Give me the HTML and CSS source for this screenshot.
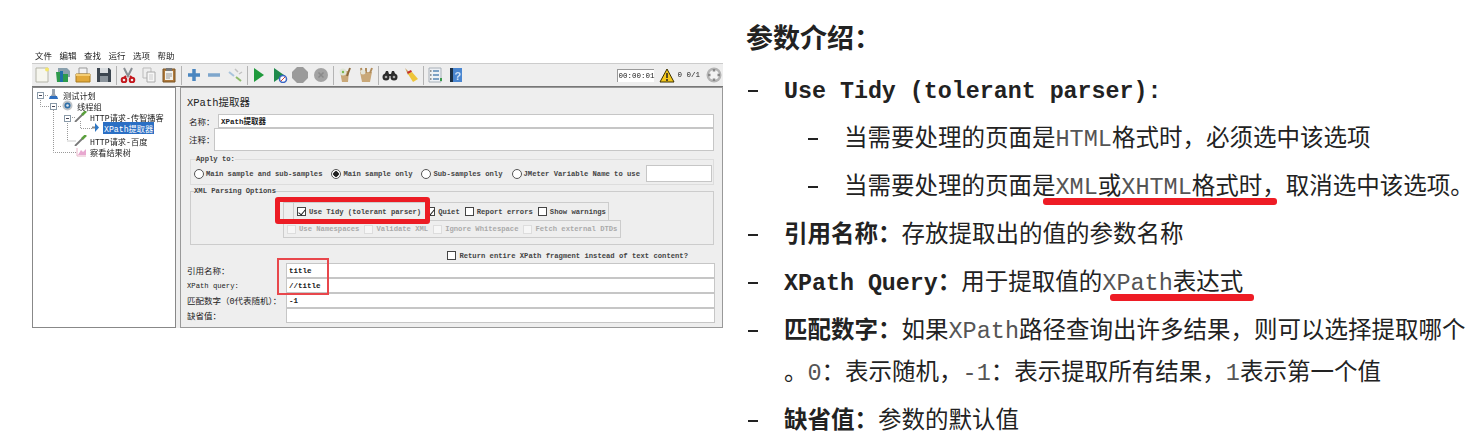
FILE: index.html
```html
<!doctype html>
<html lang="zh-CN">
<head>
    <meta charset="UTF-8">
    <title>XPath提取器 参数介绍</title>
    <link rel="stylesheet" href="styles.css">
</head>
<body>
<div class="page">

    <div class="shot">
        <div class="menubar">
            <span>文件</span><span>编辑</span><span>查找</span><span>运行</span><span>选项</span><span>帮助</span>
        </div>

        <div class="toolbar">
            <svg class="tb" viewBox="0 0 16 16"><path d="M2 1h12v14H2z" fill="#f6f6ee" stroke="#b4b4a8"/><circle cx="13" cy="2.500" r="2" fill="#f4e66a"/></svg>
            <svg class="tb" viewBox="0 0 16 16"><path d="M3 1h9l3 3v6H3z" fill="#8aa0ad"/><path d="M1 5h6l1 2h5v8H2z" fill="#2d9a4c"/><path d="M5 4h3v11H5z" fill="#1f6fa8"/></svg>
            <svg class="tb" viewBox="0 0 16 16"><path d="M4 1h8v6H4z" fill="#f2f2f2" stroke="#999"/><path d="M1 7h14v8H1z" fill="#e2a93a" stroke="#a87a1e"/><path d="M1 7h14v2H1z" fill="#f4cd74"/></svg>
            <svg class="tb" viewBox="0 0 16 16"><path d="M1 1h12l2 2v12H1z" fill="#3c4650"/><path d="M4 1h8v5H4z" fill="#d9dde0"/><path d="M4 9h8v6H4z" fill="#8a939b"/></svg>
            <i class="sep"></i>
            <svg class="tb" viewBox="0 0 16 16"><path d="M4 1l4 8 4-8" fill="none" stroke="#8a8f94" stroke-width="2"/><path d="M6 9l-2 2M10 9l2 2" stroke="#c3181e" stroke-width="2"/><circle cx="4" cy="13" r="2.300" fill="none" stroke="#c3181e" stroke-width="2"/><circle cx="12" cy="13" r="2.300" fill="none" stroke="#c3181e" stroke-width="2"/></svg>
            <svg class="tb" viewBox="0 0 16 16"><path d="M2 1h8v10H2z" fill="#eee" stroke="#bbb"/><path d="M6 5h8v10H6z" fill="#f6f6f6" stroke="#aaa"/><path d="M8 8h4M8 10h4M8 12h4" stroke="#ccc"/></svg>
            <svg class="tb" viewBox="0 0 16 16"><path d="M2 2h12v13H2z" fill="#b07a3c" stroke="#7a5424"/><path d="M4 4h8v9H4z" fill="#f2f2ee"/><path d="M5 1h6v3H5z" fill="#777"/><path d="M5 7h6M5 9h6M5 11h4" stroke="#999"/></svg>
            <i class="sep"></i>
            <svg class="tb" viewBox="0 0 16 16"><path d="M8 2v12M2 8h12" stroke="#4a86c0" stroke-width="3.500"/></svg>
            <svg class="tb" viewBox="0 0 16 16"><path d="M2 8h12" stroke="#7ea6cc" stroke-width="3.500"/></svg>
            <svg class="tb" viewBox="0 0 16 16"><path d="M2 5l5 4" stroke="#a9c4dc" stroke-width="2"/><path d="M9 10l5 4" stroke="#8dbb6a" stroke-width="2"/><path d="M8 2l3 3M12 7l3-2" stroke="#c2c2c2" stroke-width="1.500"/></svg>
            <i class="sep"></i>
            <svg class="tb" viewBox="0 0 16 16"><path d="M3 1l10 7-10 7z" fill="#1f9a3c"/></svg>
            <svg class="tb" viewBox="0 0 16 16"><path d="M2 1l10 7-10 7z" fill="#1f8a4c"/><circle cx="11" cy="12" r="3.500" fill="#fff" stroke="#3a66c4" stroke-width="1.500"/><path d="M9 14l4-4" stroke="#d0463c"/></svg>
            <svg class="tb" viewBox="0 0 16 16"><path d="M5 0h6l5 5v6l-5 5H5l-5-5V5z" fill="#9b9b9b"/></svg>
            <svg class="tb" viewBox="0 0 16 16"><circle cx="8" cy="8" r="7" fill="#a3a3a3"/><path d="M5.500 5.500l5 5M10.500 5.500l-5 5" stroke="#8a8a8a" stroke-width="1.500"/></svg>
            <i class="sep"></i>
            <svg class="tb" viewBox="0 0 16 16"><path d="M3 4h9l-1 11H5z" fill="#c9a878"/><circle cx="6" cy="5" r="3.500" fill="#dfe6d8"/><circle cx="6" cy="5" r="1.200" fill="#7cb84a"/><path d="M13 1l-3 8" stroke="#8c6a3c" stroke-width="2"/></svg>
            <svg class="tb" viewBox="0 0 16 16"><path d="M2 5h12l-2 10H4z" fill="#c9a878"/><path d="M4 6L3 1M8 6V1M12 6l2-5" stroke="#b08c5c" stroke-width="2"/><circle cx="5" cy="5" r="2.500" fill="#e4e4d8"/></svg>
            <i class="sep"></i>
            <svg class="tb" viewBox="0 0 16 16"><circle cx="4" cy="10" r="3.500" fill="#2c2c2c"/><circle cx="12" cy="10" r="3.500" fill="#2c2c2c"/><path d="M2 9l2-5h2l1 3h2l1-3h2l2 5z" fill="#2c2c2c"/><circle cx="4" cy="10" r="1.300" fill="#aaa"/><circle cx="12" cy="10" r="1.300" fill="#aaa"/></svg>
            <svg class="tb" viewBox="0 0 16 16"><path d="M2 1l5 5-2 2z" fill="#c9a060"/><path d="M4 5l4-2 1 2-4 2z" fill="#c8302a"/><path d="M5 7l4-2 6 7-5 3z" fill="#eec53a"/></svg>
            <i class="sep"></i>
            <svg class="tb" viewBox="0 0 16 16"><path d="M2 1h12v14H2z" fill="#eef1f5" stroke="#a8b0b8"/><path d="M6 4h6M6 8h6M6 12h6" stroke="#5a86b4" stroke-width="1.500"/><path d="M3 4h1.500M3 8h1.500M3 12h1.500" stroke="#777" stroke-width="1.500"/><path d="M13 11h2v3h-2z" fill="#3a9a4c"/></svg>
            <svg class="tb" viewBox="0 0 16 16"><path d="M2 1h3v14H2z" fill="#1d3044"/><path d="M5 1h9v14H5z" fill="#4a86d0"/><text x="6.500" y="12.500" class="helpq">?</text></svg>

            <div class="status">
                <span class="clock">00:00:01</span>
                <svg class="warn" viewBox="0 0 16 15"><path d="M8 1l7 13H1z" fill="#f4c81e" stroke="#3a3000"/><path d="M8 5v5M8 11v2" stroke="#222" stroke-width="1.500"/></svg>
                <span class="count">0</span>
                <span class="count wide">0/1</span>
                <svg class="ring" viewBox="0 0 16 16"><circle cx="8" cy="8" r="7.500" fill="#b4b4b4"/><circle cx="8" cy="8" r="5" fill="#f2f2f2"/><path d="M8 2v2.500M8 11.500V14M2 8h2.500M11.500 8H14" stroke="#888" stroke-width="2.500"/></svg>
            </div>
        </div>

        <div class="main">
            <div class="tree">
                <svg class="links" viewBox="0 0 144 100">
                    <path d="M8.500 11v8.500H18M21.500 23V65.500H44M35.500 34V54H44M48.500 34V41.500H60M11 8.500h6M24 19.500h5M38 30.500h5" fill="none" stroke="#999" stroke-dasharray="1 1"/>
                    <g fill="#fff" stroke="#8a9aa8"><rect x="5.500" y="5.500" width="6" height="6"/><rect x="18.500" y="16.500" width="6" height="6"/><rect x="32.500" y="28.500" width="6" height="6"/></g>
                    <path d="M7 8.500h3M20 19.500h3M34 31.500h3" stroke="#445"/>
                </svg>
                <div class="node l0"><svg viewBox="0 0 13 11"><path d="M5 0h3v5l3 5H2l3-5z" fill="#9aa4b0"/><path d="M3 7h7l1 3H2z" fill="#2f6fc0"/></svg><span>测试计划</span></div>
                <div class="node l1"><svg viewBox="0 0 13 11"><circle cx="6.500" cy="5.500" r="5" fill="#c0c4c8"/><circle cx="6.500" cy="5.500" r="3" fill="#2f6fa8"/><circle cx="6.500" cy="5.500" r="1.300" fill="#dfe6ee"/></svg><span>线程组</span></div>
                <div class="node l2"><svg viewBox="0 0 13 11"><path d="M1 11L9 3" stroke="#777" stroke-width="1.800"/><path d="M8 4l4-4" stroke="#5aa03c" stroke-width="2.500"/></svg><span>HTTP请求-传智播客</span></div>
                <div class="node l3"><svg viewBox="0 0 13 11"><path d="M5 5.500h3" stroke="#888" stroke-width="2"/><path d="M8 1l4 4.500L8 10z" fill="#2f78c4"/></svg><span class="picked">XPath提取器</span></div>
                <div class="node l2 gap"><svg viewBox="0 0 13 11"><path d="M1 11L9 3" stroke="#777" stroke-width="1.800"/><path d="M8 4l4-4" stroke="#5aa03c" stroke-width="2.500"/></svg><span>HTTP请求-百度</span></div>
                <div class="node l2"><svg viewBox="0 0 13 11"><path d="M3 2v8h9" fill="none" stroke="#e8b4c8"/><path d="M4 9l3-5 2 2 3-3v6z" fill="#e8a8d0"/></svg><span>察看结果树</span></div>
            </div>

            <div class="panel">
                <div class="title">XPath提取器</div>
                <div class="row name"><label>名称：</label><div class="field val">XPath提取器</div></div>
                <div class="row note"><label>注释：</label><div class="field"></div></div>

                <fieldset class="group">
                    <legend>Apply to:</legend>
                    <div class="radios">
                        <span class="radio"></span><span class="en">Main sample and sub-samples</span>
                        <span class="radio on"></span><span class="en">Main sample only</span>
                        <span class="radio"></span><span class="en">Sub-samples only</span>
                        <span class="radio"></span><span class="en">JMeter Variable Name to use</span>
                        <div class="field varname"></div>
                    </div>
                </fieldset>

                <fieldset class="group xml">
                    <legend>XML Parsing Options</legend>
                    <div class="optbox first">
                        <i class="grip"></i>
                        <span class="opt"><b class="cb on"></b><span class="en">Use Tidy (tolerant parser)</span></span>
                        <span class="opt"><b class="cb on"></b><span class="en">Quiet</span></span>
                        <span class="opt"><b class="cb"></b><span class="en">Report errors</span></span>
                        <span class="opt"><b class="cb"></b><span class="en">Show warnings</span></span>
                    </div>
                    <div class="optbox off">
                        <span class="opt"><b class="cb"></b><span class="en">Use Namespaces</span></span>
                        <span class="opt"><b class="cb"></b><span class="en">Validate XML</span></span>
                        <span class="opt"><b class="cb"></b><span class="en">Ignore Whitespace</span></span>
                        <span class="opt"><b class="cb"></b><span class="en">Fetch external DTDs</span></span>
                    </div>
                </fieldset>

                <div class="fragment">
                    <span class="opt"><b class="cb"></b><span class="en">Return entire XPath fragment instead of text content?</span></span>
                </div>

                <div class="form">
                    <label>引用名称：</label><div class="field val">title</div>
                    <label class="en">XPath query:</label><div class="field val">//title</div>
                    <label>匹配数字（0代表随机）：</label><div class="field val">-1</div>
                    <label>缺省值：</label><div class="field"></div>
                </div>

                <i class="hl-thick"></i>
                <i class="hl-thin"></i>
            </div>
        </div>
    </div>

    <div class="notes">
        <h1>参数介绍：</h1>
        <ul>
            <li><strong class="code">Use Tidy (tolerant parser):</strong></li>
            <li class="sub">当需要处理的页面是<code>HTML</code>格式时，必须选中该选项</li>
            <li class="sub">当需要处理的页面是<span class="mark m1"><code>XML</code>或<code>XHTML</code>格式时</span>，取消选中该选项。</li>
            <li><strong>引用名称：</strong>存放提取出的值的参数名称</li>
            <li><strong class="code">XPath Query</strong><strong>：</strong>用于提取值的<span class="mark m2"><code>XPath</code>表达式</span></li>
            <li><strong>匹配数字：</strong>如果<code>XPath</code>路径查询出许多结果，则可以选择提取哪个<br>。<code>0</code>：表示随机，<code>-1</code>：表示提取所有结果，<code>1</code>表示第一个值</li>
            <li><strong>缺省值：</strong>参数的默认值</li>
        </ul>
    </div>

</div>
</body>
</html>
```

FILE: styles.css
```css
*{margin:0;padding:0;box-sizing:border-box;}
html,body{
    height:434px;
    overflow:hidden;
    background:#fff;
}
body{
    font-family:"Liberation Mono","Noto Sans CJK SC",monospace;
    color:#222;
}
.page{
    display:flex;
    align-items:flex-start;
}

/* 左边: JMeter 截图 */
.shot{
    width:691px;
    flex:none;
    margin:50px 0 0 32px;
    filter:blur(.35px);
    font-size:8.5px;
}
.menubar{
    display:flex;
    gap:7.5px;
    height:13px;
    padding-left:3px;
    line-height:15px;
}
.toolbar{
    display:flex;
    align-items:center;
    height:24px;
    background:#eee;
    border-top:1px solid #ccc;
    border-bottom:1px solid #777;
}
.tb{
    width:16px;
    height:16px;
    margin:0 2.250px;
    flex:none;
}
.sep{
    width:1px;
    height:19px;
    margin:0 1.500px;
    background:#b4b4b4;
    flex:none;
}
.helpq{
    font:bold 11px "Liberation Sans",sans-serif;
    fill:#cfe2f6;
}
.status{
    display:flex;
    align-items:center;
    margin-left:auto;
    padding-right:1px;
}
.clock{
    width:37px;
    height:13px;
    font-size:7.500px;
    line-height:13px;
    background:#fff;
    border-top:1px solid #999;
    border-left:1px solid #999;
}
.warn{
    width:16px;
    height:15px;
    margin:0 2px 0 5px;
}
.count{
    font-size:7.500px;
}
.count.wide{
    margin:0 6px 0 4.500px;
}
.ring{
    width:16px;
    height:16px;
}
.main{
    display:flex;
    gap:4px;
    height:241px;
    background:#eee;
}

/* 树 */
.tree{
    position:relative;
    width:144px;
    flex:none;
    padding-top:1px;
    background:#fff;
    border:1px solid #888;
    font-size:8.2px;
}
.links{
    position:absolute;
    left:-1px;
    top:-1px;
    width:144px;
    height:100px;
}
.node{
    position:relative;
    display:flex;
    align-items:center;
    gap:3px;
    height:11px;
}
.node svg{
    width:13px;
    height:11px;
    flex:none;
}
.l0{margin-left:14px;}
.l1{margin-left:28px;}
.l2{margin-left:41px;}
.l3{margin-left:54px;}
.gap{margin-top:2px;}
.picked{
    padding:0 1px;
    color:#fff;
    background:#2b6fc4;
}

/* 右边表单 */
.panel{
    position:relative;
    flex:1;
    min-width:0;
    padding:8px 7px 0 6px;
    background:#eee;
    border:1px solid #999;
}
.title{
    height:12px;
    margin-bottom:6px;
    font-size:10.500px;
    line-height:14px;
}
.row{
    display:flex;
    align-items:center;
    margin:0 1px 0 2px;
}
.row.name{height:14px;}
.row.note{height:23px;}
.row label{white-space:nowrap;flex:none;}
.row.name label{width:29px;}
.row.note label{width:25px;}
.row .field{flex:1;height:100%;}
.field{
    background:#fff;
    border:1px solid #c6c6c6;
}
.val{
    padding-left:2px;
    font-size:7.500px;
    font-weight:bold;
    line-height:14px;
}
.form .val{line-height:15px;}
.en{
    font-size:7.200px;
    font-weight:bold;
    color:#444;
    white-space:nowrap;
}
.group{
    margin:4px 1px 0 3px;
    padding:0 1px 2px 3px;
    border:1px solid #ddd;
}
.group legend{
    margin-left:2px;
    font-size:7.200px;
    font-weight:bold;
    line-height:9px;
    color:#444;
}
.radios{
    display:flex;
    align-items:center;
    height:17px;
    margin-top:1px;
}
.radio{
    width:10px;
    height:10px;
    margin:0 2px 0 9px;
    background:#fff;
    border:1px solid #555;
    border-radius:50%;
    flex:none;
}
.radio:first-child{margin-left:0;}
.radio.on{background:radial-gradient(circle,#222 0 2.500px,#fff 3px);}
.varname{
    width:66px;
    height:17px;
    margin-left:6px;
}
.xml{
    margin-top:2px;
    padding:6px 0 6px 92px;
    border-color:#ccc;
}
.xml legend{margin-left:-89px;}
.optbox{
    display:flex;
    align-items:center;
    gap:5px;
    width:326px;
    height:19px;
    padding-left:3px;
    border:1px solid #ccc;
}
.optbox.first{
    padding-left:0;
}
.optbox.off{
    width:338px;
    height:18px;
    margin-top:-1px;
}
.optbox.off .en{color:#aaa;}
.optbox.off .cb{border-color:#ddd;background:#f6f6f6;}
.grip{
    width:10px;
    height:100%;
    margin-right:-2px;
    border-right:1px solid #ccc;
    flex:none;
}
.opt{
    display:inline-flex;
    align-items:center;
    gap:3px;
}
.cb{
    position:relative;
    width:9px;
    height:9px;
    background:#fff;
    border:1px solid #444;
    flex:none;
}
.cb.on::after{
    content:"";
    position:absolute;
    left:2px;
    top:0;
    width:3px;
    height:6px;
    border-right:1px solid #222;
    border-bottom:1px solid #222;
    transform:rotate(40deg);
}
.fragment{
    display:flex;
    justify-content:flex-end;
    height:9px;
    margin-top:6px;
    padding-right:27px;
}
.form{
    display:grid;
    grid-template-columns:99px 1fr;
    grid-auto-rows:15px;
    align-items:center;
    margin-top:3px;
}
.form .field{height:15px;}
.form label{white-space:nowrap;}
.form label.en{font-weight:normal;color:#222;}
.hl-thick{
    position:absolute;
    left:94px;
    top:109px;
    width:155px;
    height:27px;
    border:5px solid #ec1c24;
    border-radius:3px;
}
.hl-thin{
    position:absolute;
    left:96px;
    top:170px;
    width:52px;
    height:37px;
    border:2px solid #e8474c;
}

/* 右边说明 */
.notes{
    margin:19px 0 0 23px;
    font-size:23.500px;
    line-height:42px;
    white-space:nowrap;
}
.notes h1{
    height:42px;
    margin-bottom:10px;
    font-size:27px;
    font-weight:bold;
    line-height:44px;
}
.notes ul{list-style:none;}
.notes li{
    position:relative;
    margin-bottom:6px;
    padding-left:38px;
}
.notes li::before{
    content:"";
    position:absolute;
    left:2px;
    top:19px;
    width:10px;
    height:2px;
    background:#222;
}
.notes li.sub{padding-left:98px;}
.notes li.sub::before{left:62px;}
.notes strong{font-weight:bold;}
.code{font-size:23.300px;}
.notes code{
    font-family:"Liberation Mono",monospace;
    color:#555;
}
.mark{position:relative;}
.mark::after{
    content:"";
    position:absolute;
    height:7px;
    background:#ee1c25;
    border-radius:3px;
}
.m1::after{left:-13px;right:-15px;top:24px;}
.m2::after{left:8px;right:-11px;top:24px;}
```
